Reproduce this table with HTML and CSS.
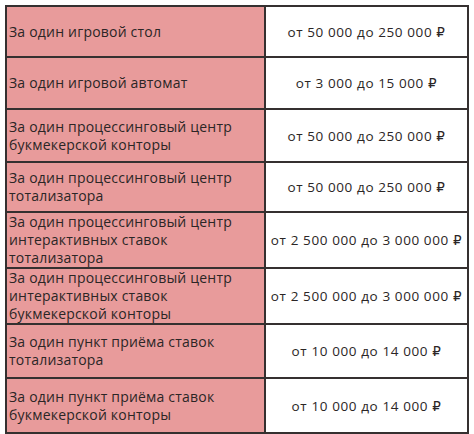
FILE: index.html
```html
<!DOCTYPE html>
<html lang="ru">
<head>
<meta charset="utf-8">
<link rel="stylesheet" href="styles.css">
</head>
<body>
<table class="rates">
  <tr class="r1"><td class="name">За один игровой стол</td><td class="sum">от 50 000 до 250 000 ₽</td></tr>
  <tr class="r2"><td class="name">За один игровой автомат</td><td class="sum">от 3 000 до 15 000 ₽</td></tr>
  <tr class="r3"><td class="name">За один процессинговый центр<br>букмекерской конторы</td><td class="sum">от 50 000 до 250 000 ₽</td></tr>
  <tr class="r4"><td class="name">За один процессинговый центр<br>тотализатора</td><td class="sum">от 50 000 до 250 000 ₽</td></tr>
  <tr class="r5"><td class="name">За один процессинговый центр<br>интерактивных ставок<br>тотализатора</td><td class="sum">от 2 500 000 до 3 000 000 ₽</td></tr>
  <tr class="r6"><td class="name">За один процессинговый центр<br>интерактивных ставок<br>букмекерской конторы</td><td class="sum">от 2 500 000 до 3 000 000 ₽</td></tr>
  <tr class="r7"><td class="name">За один пункт приёма ставок<br>тотализатора</td><td class="sum">от 10 000 до 14 000 ₽</td></tr>
  <tr class="r8"><td class="name">За один пункт приёма ставок<br>букмекерской конторы</td><td class="sum">от 10 000 до 14 000 ₽</td></tr>
</table>
</body>
</html>
```
FILE: styles.css
```css
html, body {
  margin: 0;
  padding: 0;
  background: #ffffff;
}
body {
  padding: 5px 5px 0 5px;
  font-family: "Open Sans", "DejaVu Sans", sans-serif;
  color: #2b2626;
}
.rates {
  border-collapse: collapse;
  width: 464px;
  table-layout: fixed;
}
.rates td {
  border: 2px solid #353030;
  padding: 0 2px;
  vertical-align: middle;
  font-size: 14px;
  line-height: 18px;
  letter-spacing: 0.2px;
  white-space: nowrap;
}
.rates .name {
  width: 253px;
  background: #e89b9b;
  text-align: left;
}
.rates .sum {
  text-align: center;
  font-size: 13.5px;
  letter-spacing: 0.6px;
  background: #ffffff;
}
.r1 { height: 51px; }
.r2 { height: 52px; }
.r3 { height: 53px; }
.r4 { height: 50px; }
.r5 { height: 53px; }
.r6 { height: 55px; }
.r7 { height: 54px; }
.r8 { height: 55px; }
```
